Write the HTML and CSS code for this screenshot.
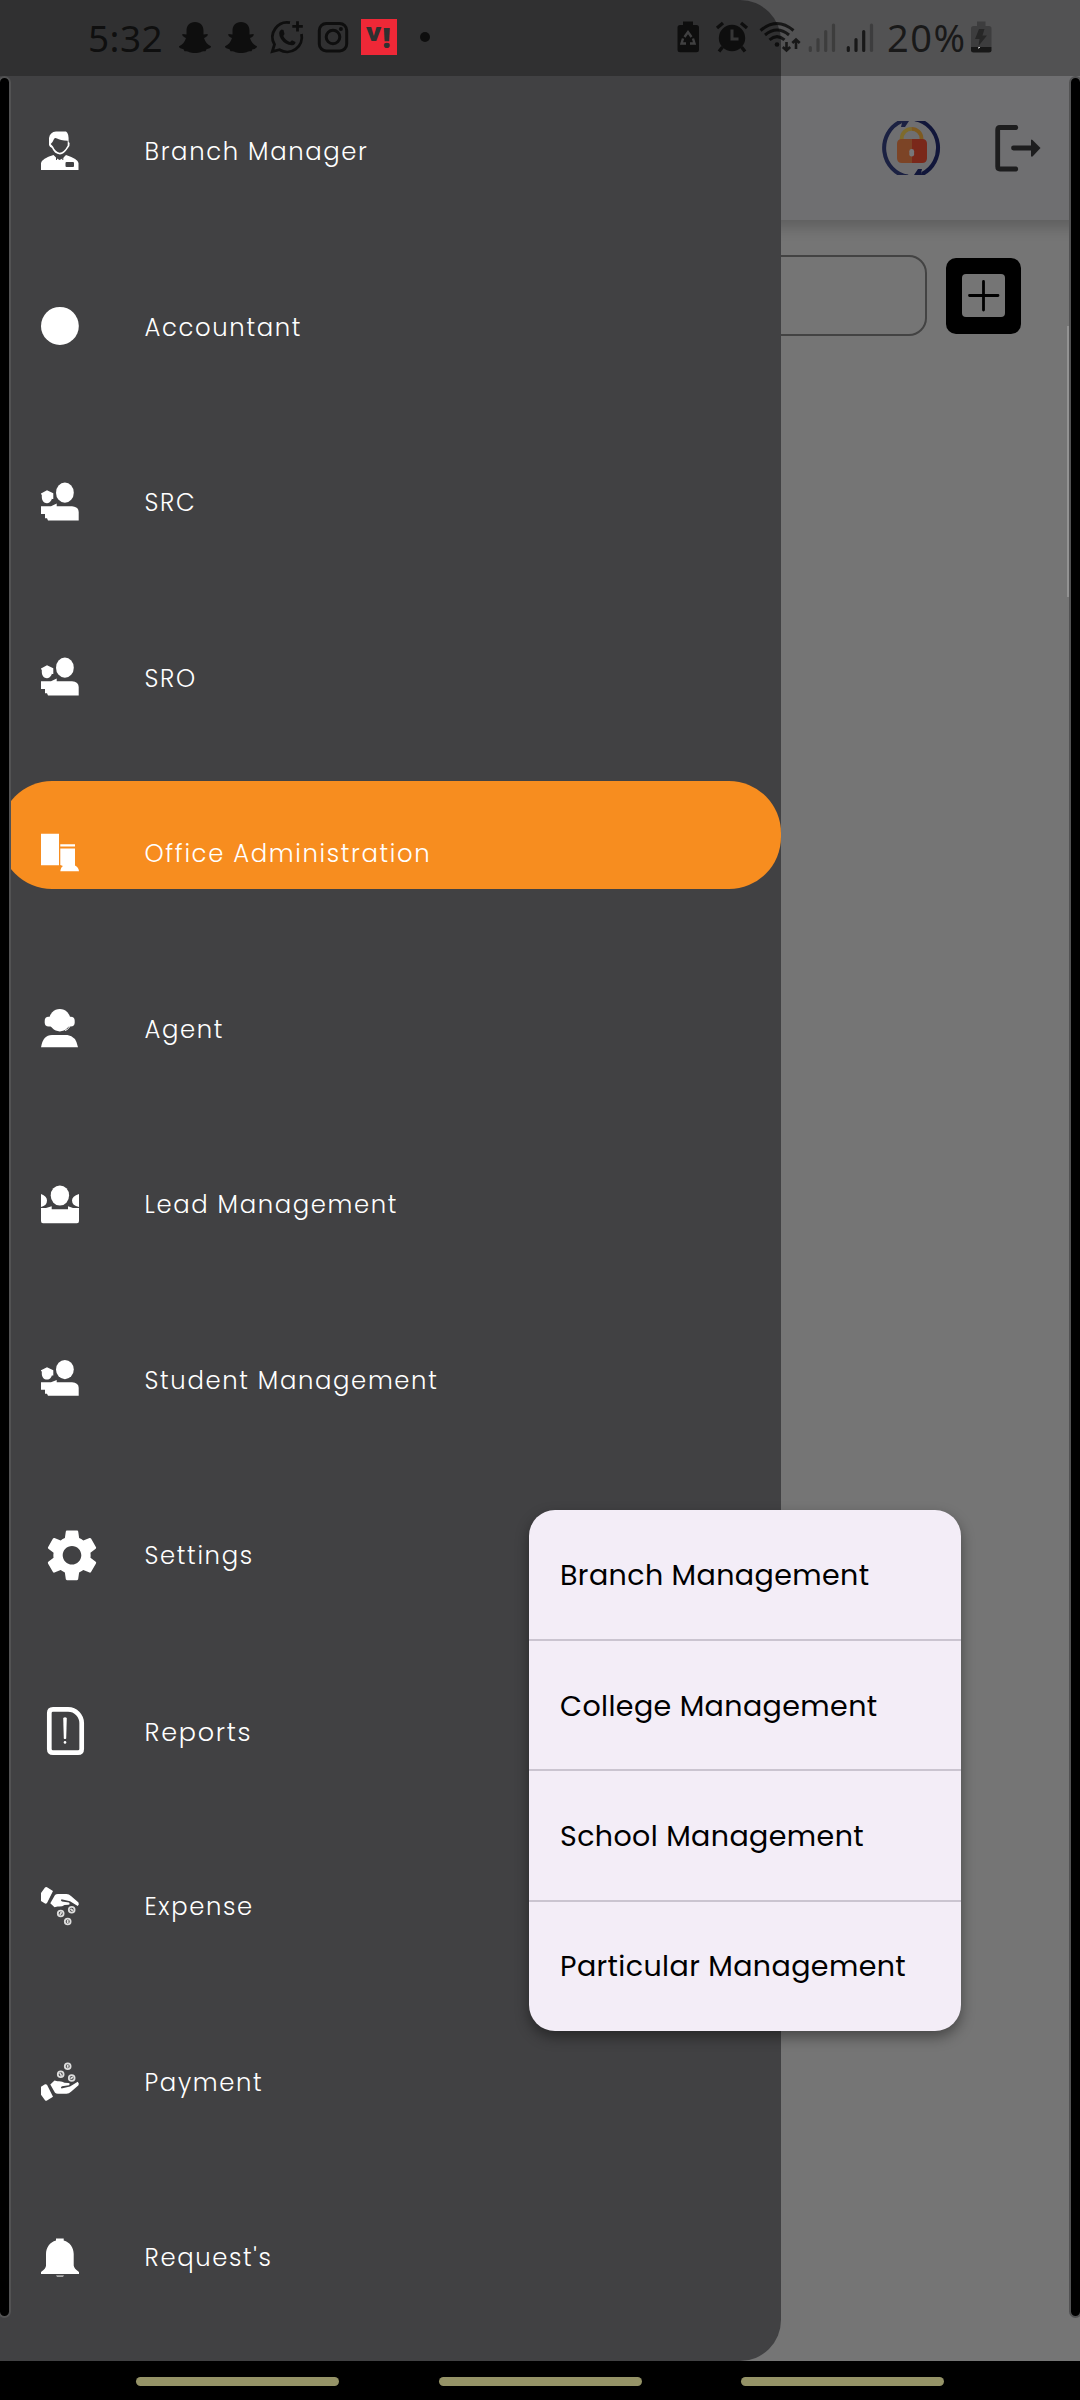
FILE: index.html
```html
<!DOCTYPE html>
<html lang="en">
<head>
<meta charset="utf-8">
<title>Office Administration</title>
<link rel="stylesheet" href="styles.css">
</head>
<body>
<svg class="defs" width="0" height="0">
  <defs>
    <g id="people">
      <ellipse cx="23.9" cy="16.7" rx="8.9" ry="10.1"/>
      <path d="M0 17.5L6 14.3L12.3 17.3V23H11V18.6C12 23 9.500 27.200 6 27.200C3 27.200.8 24.500.8 21V18.400H0Z"/>
      <path d="M0 30.200H10L15.700 27.600V30.200H31Q37.700 30.800 37.700 36V44.500H7L6 42.300H4V38H0Z"/>
    </g>
    <g id="hand">
      <path d="M4 7.500Q5 6.500 6 7.300L12 11L6 23Q5 24 4 23.500L0 21V13Z"/>
      <path d="M9.300 23.200L14 15Q15 14 17 14H25.500Q28 14.200 30 16L37.500 22.500Q38.500 24.500 36.700 26L29 21.200L20.500 19.200Q19 20.500 21 21.500L28 22.500Q29.500 24.500 27.500 24.800L23.500 25Q21 27 16.500 26.500L13.500 27.200Z"/>
      <g class="coins"><circle cx="19.7" cy="33.500" r="2.900"/><circle cx="30.700" cy="29.800" r="2.900"/><circle cx="26.700" cy="41.500" r="2.900"/><path d="M18.900 35L20.500 32M29.500 29L32 30.700M26.700 40V43"/></g>
    </g>
    <path id="ghost" d="M23 22C28.500 22 31.500 25.500 31.500 31V34.500L35.500 34C36.500 35.500 34 37.300 32 38C33 42 36 45 39 46.300C39 48.500 36.500 48.700 34.500 49.300L33.500 51.300C30 50.500 29 53 23 53C17 53 16 50.500 12.500 51.300L11.500 49.300C9.500 48.700 7 48.500 7 46.300C10 45 13 42 14 38C12 37.300 9.500 35.500 10.500 34L14.500 34.500V31C14.500 25.500 17.500 22 23 22Z"/>
  </defs>
</svg>

<div class="screen">
  <main class="app">
    <header class="app-header">
      <svg class="lock" width="61" height="54" viewBox="0 0 61 54">
        <path d="M27 55.600A27.500 28.800 0 0 1 20 .5" fill="none" stroke="#1b2142" stroke-width="4"/>
        <path d="M34 -1.600A27.500 28.800 0 0 1 41 53" fill="none" stroke="#11163a" stroke-width="4"/>
        <path d="M16 0H28L24 6L20 6L21 2Z" fill="#1b2142"/>
        <path d="M45 54H33L37 48L41 48L40 52Z" fill="#11163a"/>
        <path d="M20.700 19V17.500A9.900 9.900 0 0 1 30.600 7.800" fill="none" stroke="#7e6b2c" stroke-width="3.800"/>
        <path d="M40.500 19V17.500A9.900 9.900 0 0 0 30.600 7.800" fill="none" stroke="#7e5a20" stroke-width="3.800"/>
        <path d="M31 18H21Q16 18 16 23V37Q16 42 21 42H31Z" fill="#7c4426"/>
        <path d="M31 18H41Q46 18 46 23V37Q46 42 41 42H31Z" fill="#7a281a"/>
        <rect x="28.300" y="28" width="4.800" height="7.500" rx="2.200" fill="#77777a"/>
      </svg>
      <svg class="logout" width="48" height="48" viewBox="0 0 48 48">
        <path d="M21.800 3.500H6Q3.700 3.500 3.700 6V42.500Q3.700 45 6 45H21.800M19.500 24H38" fill="none" stroke="#1d1d1e" stroke-width="4.800" stroke-linecap="round"/>
        <path d="M37 16Q37.500 15 38.500 16L46.500 24L38.500 32.500Q37.500 33 37 32Z" fill="#1d1d1e"/>
      </svg>
    </header>
    <div class="toolbar">
      <div class="search"></div>
      <div class="add">
        <svg width="43" height="43" viewBox="0 0 43 43"><rect width="43" height="43" rx="4" fill="#757575"/><path d="M21.500 7.500V36M7.500 21.500H36" stroke="#000" stroke-width="2.800" stroke-linecap="round"/></svg>
      </div>
    </div>
  </main>

  <nav class="drawer">
    <div class="item"><svg class="icon" viewBox="0 0 64 52">
      <path d="M8 20V13Q9 7 15 6.500H25Q28 8 27.600 17L28.600 18Q29 21.500 27 23Q23 29.300 19 29.500Q13 28.500 11 23Q8.500 22 8 20Z"/>
      <path class="cut" d="M9.700 19L11.500 17L13 14Q14 12.500 16 13.500Q19 15.300 26.700 15.700V20.500Q23 27.500 18.500 27.800Q14.500 27 12 21.500Z"/>
      <path d="M0 45V38Q1 33.500 12.500 30L16 33.500L18.500 35L21.500 33.500L25 30Q37 34 37.500 38V45Z"/>
      <path class="cut" d="M15 31V35L16 35V32ZM21.300 32V35H22.300V31Z"/>
      <rect class="cut" x="24.500" y="37" width="8.500" height="5" rx="1"/></svg><span>Branch Manager</span></div>
    <div class="item"><svg class="icon" viewBox="0 0 64 52"><ellipse cx="18.900" cy="25.900" rx="18.900" ry="19"/></svg><span>Accountant</span></div>
    <div class="item"><svg class="icon" viewBox="0 0 64 52"><use href="#people"/></svg><span>SRC</span></div>
    <div class="item"><svg class="icon" viewBox="0 0 64 52"><use href="#people"/></svg><span>SRO</span></div>
    <div class="item active"><svg class="icon" viewBox="0 0 64 52"><path d="M0 6.800H18V38.200H0ZM19.300 17.200H34V19.500H19.300ZM19.300 21.500H34V38.500Q37.500 40 38 44.200H19.300Q20 40 22 39L19.300 38Z"/></svg><span>Office Administration</span></div>
    <div class="item"><svg class="icon" viewBox="0 0 64 52"><ellipse cx="18.800" cy="18.200" rx="10.700" ry="11.200"/><rect x="3.700" y="14.700" width="30" height="9.800" rx="4"/><path d="M24 28.500Q29 27 29 22" fill="none" stroke="#fff"/><path d="M0 45.300Q2 33 11 33H26.500Q35 34 37 45.300Z"/></svg><span>Agent</span></div>
    <div class="item"><svg class="icon" viewBox="0 0 64 52"><ellipse cx="18.900" cy="17.500" rx="9.200" ry="10.100"/><path d="M0 16Q6 18 6 22.500Q6 27.500 0 29ZM38 16Q31 18 31 22.500Q31 27.500 38 29ZM0 30H5L10.700 28.300V31.300H27V28.300L32 30H38V43Q38 45.200 36 45.200H2Q0 45.200 0 43Z"/></svg><span>Lead Management</span></div>
    <div class="item"><svg class="icon" viewBox="0 0 64 52"><use href="#people" transform="translate(0 .8) scale(1 .945)"/></svg><span>Student Management</span></div>
    <div class="item"><svg class="icon" viewBox="0 0 64 52"><path transform="translate(-.06 -4.750) scale(2.588)" d="M19.140,12.940c0.040-0.300,0.060-0.610,0.060-0.940c0-0.320-0.020-0.640-0.070-0.940l2.030-1.580c0.180-0.140,0.230-0.410,0.120-0.610l-1.920-3.320c-0.120-0.220-0.370-0.290-0.590-0.220l-2.390,0.960c-0.500-0.380-1.030-0.700-1.620-0.940L14.400,2.810c-0.040-0.240-0.240-0.410-0.480-0.410h-3.840c-0.240,0-0.430,0.170-0.470,0.410L9.250,5.350C8.660,5.590,8.120,5.920,7.630,6.290L5.240,5.330c-0.220-0.080-0.470,0-0.590,0.220L2.740,8.870C2.620,9.080,2.660,9.340,2.860,9.480l2.030,1.580C4.840,11.360,4.800,11.690,4.800,12s0.020,0.640,0.070,0.940l-2.030,1.580c-0.180,0.140-0.230,0.410-0.120,0.610l1.920,3.320c0.120,0.220,0.370,0.290,0.590,0.220l2.390-0.960c0.500,0.380,1.030,0.700,1.620,0.940l0.360,2.540c0.050,0.240,0.240,0.410,0.480,0.410h3.840c0.240,0,0.440-0.170,0.470-0.410l0.360-2.540c0.590-0.240,1.130-0.560,1.620-0.940l2.390,0.960c0.220,0.080,0.470,0,0.590-0.220l1.920-3.320c0.120-0.220,0.070-0.470-0.120-0.610L19.140,12.940z M12,15.600c-1.980,0-3.600-1.620-3.600-3.600s1.620-3.600,3.600-3.600s3.600,1.620,3.600,3.600S13.980,15.600,12,15.600z"/></svg><span>Settings</span></div>
    <div class="item wide"><svg class="icon" viewBox="0 0 64 52"><path d="M12 5.300H27C35 5.300 40.700 12 40.700 19V45Q40.700 48.700 37 48.700H12Q8.300 48.700 8.300 45V9Q8.300 5.300 12 5.300Z" fill="none" stroke="#fff" stroke-width="4.700"/><path d="M22.200 14Q24 12.500 25.800 14L25.200 34.500Q24 35.500 22.800 34.500Z"/><circle cx="24" cy="38.400" r="1.300"/></svg><span>Reports</span></div>
    <div class="item"><svg class="icon" viewBox="0 0 64 52"><use href="#hand"/></svg><span>Expense</span></div>
    <div class="item"><svg class="icon" viewBox="0 0 64 52"><use href="#hand" transform="translate(0 52.800) scale(1 -1)"/></svg><span>Payment</span></div>
    <div class="item"><svg class="icon" viewBox="0 0 64 52"><path d="M15 7.500H22.700V9.500C29 11 32.700 17 32.700 23V34.500Q33 37.500 38 41V43H0V41Q5 37.500 5 34.500V23C5 17 8.700 11 15 9.500Z"/><path d="M15 44.200H23L22 46H16Z" fill="#aaa"/></svg><span>Request's</span></div>
  </nav>

  <div class="edge edge-left"></div>
  <div class="edge edge-right"></div>
  <div class="scroll-thumb"></div>

  <div class="popup">
    <div class="option">Branch Management</div>
    <div class="option">College Management</div>
    <div class="option">School Management</div>
    <div class="option">Particular Management</div>
  </div>

  <div class="status">
    <span class="time">5:32</span>
    <svg class="ink" width="46" height="76"><use href="#ghost"/></svg>
    <svg class="ink" width="46" height="76"><use href="#ghost"/></svg>
    <svg class="ink" width="46" height="76"><path d="M26 22.700A14.700 14.700 0 0 0 10.500 44.500L8.300 51.500L15.500 49.700A14.700 14.700 0 0 0 37.500 34" fill="none" stroke="#000" stroke-width="2.800"/><path d="M33.500 21.300V31.600M28.300 26.400H38.800" stroke="#000" stroke-width="2.800"/><path d="M17.500 29.500L19.500 30L20.500 34L19.300 36Q21.500 40.500 26 42L28 40.200L31.500 42Q31.500 45 28 45.300Q21 45 17 39Q13 32 17.500 29.500Z"/></svg>
    <svg class="ink" width="46" height="76"><rect x="9.300" y="23.500" width="27.400" height="27.400" rx="7" fill="none" stroke="#000" stroke-width="3"/><circle cx="23" cy="37" r="6.800" fill="none" stroke="#000" stroke-width="3"/><circle cx="30.900" cy="29" r="2"/></svg>
    <svg width="46" height="76"><rect x="5" y="19" width="36" height="36" fill="#ef2837"/><text class="brand" x="10" y="41" font-size="25">v</text><text class="brand" x="26.500" y="48" font-size="28">!</text></svg>
    <svg class="ink" width="46" height="76"><circle cx="23" cy="37" r="5"/></svg>
    <span class="spacer"></span>
    <svg class="ink" width="44" height="76"><path d="M17 21.500H27V25H30.500Q33 25 33 27.500V50Q33 52.300 30.500 52.300H14Q11.500 52.300 11.500 50V27.500Q11.500 25 14 25H17Z"/><path d="M18.500 37L22 32L25.500 37M27 38.500L28.500 43.500H24M20 43.500H15.500L17 38.500" fill="none" stroke="#484848" stroke-width="2.400"/></svg>
    <svg class="ink" width="44" height="76"><circle cx="22" cy="38" r="13.200"/><path d="M12.500 47L9 51.500M31.500 47L35 51.500M7 28L13 23M37 28L31 23" stroke="#000" stroke-width="3.400"/><path d="M22 29.500V39H28.500" fill="none" stroke="#383838" stroke-width="3"/></svg>
    <svg class="ink" width="52" height="76"><g fill="none" stroke="#000" stroke-width="3"><path d="M6.500 30.500Q23 16.500 39.500 30.500M11 35Q23 25 35 35M15.500 39.800Q23 33.500 30.500 39.800"/><path d="M32.500 42V50M28.800 47L32.500 50.500L36.200 47M42 49V40M38.300 43L42 39.500L45.700 43" stroke-width="2.600"/></g><circle cx="23" cy="44.500" r="2.300"/></svg>
    <svg class="ink faint" width="32" height="76"><path d="M4.300 47.500V50.500M12 39.500V50.500M19.700 31.500V50.500M27.500 25V50.500" stroke="#000" stroke-width="3.200" stroke-linecap="round"/></svg>
    <svg class="ink" width="44" height="76"><path d="M10.300 47.500V50.500M18 39.500V50.500M25.700 31.500V50.500" stroke="#000" stroke-width="3.200" stroke-linecap="round"/><path d="M33.500 25V50.500" stroke="#000" stroke-opacity=".35" stroke-width="3.200" stroke-linecap="round"/></svg>
    <span class="percent">20%</span>
    <svg class="ink" width="28" height="76"><path opacity=".35" d="M10 21.500H18.500V26H22Q24.500 26 24.500 28.500V47H4V28.500Q4 26 6.500 26H10Z"/><path d="M4 47H24.500V50.500Q24.500 52.600 22 52.600H6.500Q4 52.600 4 50.500Z"/><path opacity=".6" d="M12 29H17.500L15.500 35.500H20L11.500 46L12.500 39H8Z"/><path d="M11.500 48.500V47.500H13" fill="none" stroke="#fff"/></svg>
  </div>

  <div class="navbar"><i></i><i></i><i></i></div>
</div>
</body>
</html>
```
FILE: styles.css
```css
* { box-sizing: border-box; }
body { margin: 0; background: #000; }
.defs { display: block; position: absolute; }

.screen {
  position: relative;
  width: 1080px;
  height: 2400px;
  overflow: hidden;
  background: #000;
  font-family: Poppins, Inter, "Open Sans", sans-serif;
}

/* dimmed page behind the drawer */
.app { height: 2361px; background: #757575; }
.app-header {
  height: 220px;
  padding: 76px 38px 0 0;
  display: flex;
  justify-content: flex-end;
  align-items: center;
  gap: 52px;
  background: #6f6f71;
  box-shadow: 0 6px 12px 2px rgba(0, 0, 0, .18);
}
.toolbar {
  display: flex;
  align-items: center;
  justify-content: flex-end;
  gap: 19px;
  padding: 35px 59px 0 0;
}
.search {
  width: 860px;
  height: 81px;
  border: 2.500px solid #434343;
  border-radius: 18px;
}
.add {
  width: 75px;
  height: 76px;
  display: flex;
  align-items: center;
  justify-content: center;
  background: #000;
  border-radius: 10px;
}

/* drawer */
.drawer {
  position: absolute;
  top: 0;
  left: 0;
  width: 781px;
  height: 2361px;
  padding-top: 62.750px;
  background: #414143;
  border-radius: 0 41px 41px 0;
}
.item {
  position: relative;
  height: 175.500px;
  padding-left: 41px;
  display: flex;
  align-items: center;
  gap: 39.500px;
  color: #fff;
  font-size: 24.300px;
  font-weight: 300;
  line-height: 36px;
  letter-spacing: 1.650px;
}
.item span { position: relative; padding-top: 3px; }
.wide { font-size: 25.500px; letter-spacing: 1.700px; }
.icon { position: relative; width: 64px; height: 52px; fill: #fff; }
.cut { fill: #414143; }
.coins { fill: none; stroke: #ddd; stroke-width: 1.800; }
.active::before {
  content: "";
  position: absolute;
  left: 0;
  right: 0;
  top: 16px;
  height: 108px;
  background: #f78d1f;
  border-radius: 52px;
}

/* curved-edge handles */
.edge {
  position: absolute;
  top: 76px;
  height: 2242px;
  width: 13px;
  background: #000;
  border: 2px solid #525253;
  border-radius: 7px;
}
.edge-left { left: -2px; }
.edge-right { right: -2px; }
.scroll-thumb {
  position: absolute;
  left: 1067px;
  top: 326px;
  width: 2px;
  height: 271px;
  background: #929292;
}

/* settings submenu */
.popup {
  position: absolute;
  left: 529px;
  top: 1510px;
  width: 432px;
  height: 521px;
  display: grid;
  grid-template-rows: 131px 130.250px 130.250px 1fr;
  background: #f3edf7;
  border-radius: 26px;
  box-shadow: 0 6px 14px rgba(0, 0, 0, .4);
}
.option {
  display: flex;
  align-items: center;
  padding: 2px 0 0 31px;
  border-bottom: 2px solid #cac4d0;
  color: #000;
  font-size: 28.500px;
  white-space: nowrap;
  letter-spacing: .4px;
}
.option:last-child { padding-top: 0; border-bottom: 0; }

/* status bar */
.status {
  position: absolute;
  top: 0;
  left: 0;
  width: 1080px;
  height: 76px;
  padding: 0 85px 0 88px;
  display: flex;
  background: rgba(0, 0, 0, .26);
  font: 37px/75px "Noto Sans", sans-serif;
  color: rgba(0, 0, 0, .7);
}
.status svg { flex: none; }
.ink { opacity: .7; }
.faint { opacity: .25; }
.time { width: 84px; letter-spacing: .4px; }
.brand { font-family: "Noto Sans", sans-serif; font-weight: 900; fill: #303030; }
.spacer { flex: 1; }
.percent { width: 85px; padding-left: 5px; font-size: 38px; letter-spacing: 1.500px; }

/* system navigation */
.navbar {
  height: 39px;
  padding: 16px 136px 0;
  display: flex;
  justify-content: space-between;
}
.navbar i { width: 203px; height: 9px; border-radius: 5px; background: #959367; }
```
